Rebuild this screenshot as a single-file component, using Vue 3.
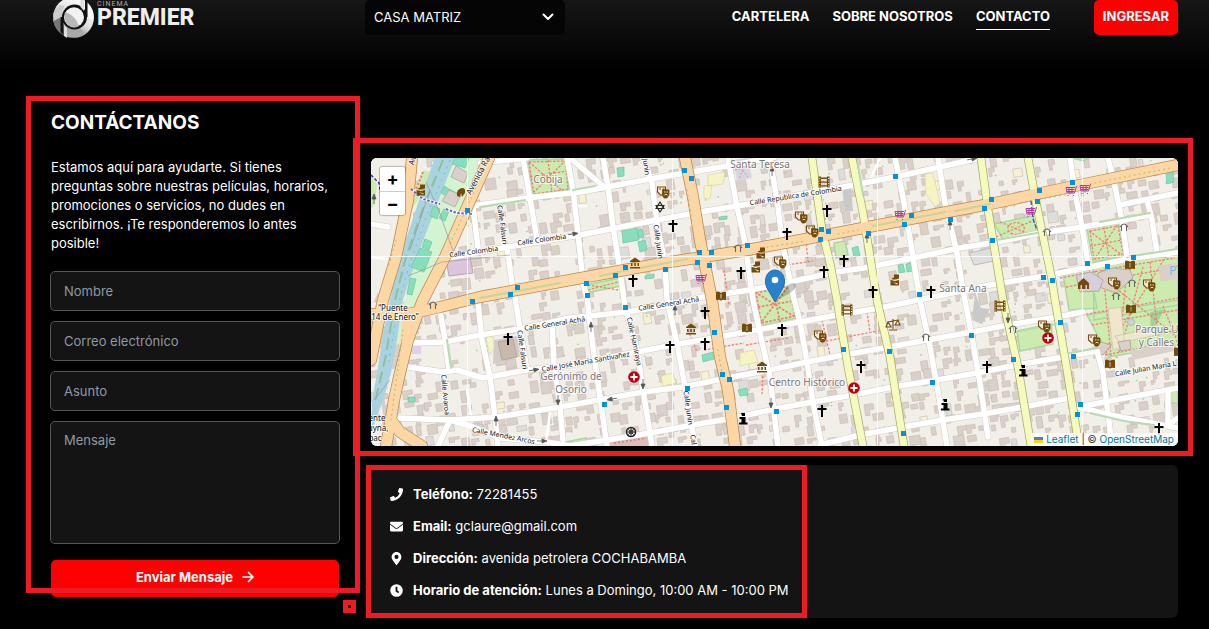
<script setup>
import { ref } from 'vue'

const sede = ref('CASA MATRIZ')
const form = ref({ nombre: '', correo: '', asunto: '', mensaje: '' })

const contacto = [
  { icon: 'phone', label: 'Teléfono:', value: '72281455' },
  { icon: 'mail', label: 'Email:', value: 'gclaure@gmail.com' },
  { icon: 'pin', label: 'Dirección:', value: 'avenida petrolera COCHABAMBA' },
  { icon: 'clock', label: 'Horario de atención:', value: 'Lunes a Domingo, 10:00 AM - 10:00 PM' }
]

const iconPaths = {
  phone: 'M493.400 24.600l-104-24c-11.300-2.600-22.900 3.300-27.500 13.900l-48 112c-4.200 9.800-1.400 21.300 6.900 28l60.600 49.600c-36 76.700-98.900 140.500-177.200 177.200l-49.600-60.600c-6.800-8.300-18.200-11.100-28-6.900l-112 48C3.900 366.500-2 378.100.600 389.400l24 104C27.100 504.200 36.700 512 48 512c256.100 0 464-207.500 464-464 0-11.200-7.700-20.900-18.600-23.400z',
  mail: 'M502 191c4-3 10 0 10 5v204c0 26-22 48-48 48H48c-26 0-48-22-48-48V196c0-5 6-8 10-5 22 17 52 39 154 114 22 15 57 48 92 48 35 0 72-34 92-48 102-75 132-97 154-114zM256 320c23 0 57-29 73-41 133-96 143-104 173-128 6-5 10-12 10-19v-20c0-26-22-48-48-48H48C22 64 0 86 0 112v20c0 7 4 14 10 19 30 24 40 32 173 128 16 12 50 41 73 41z',
  pin: 'M236 502C91 292 64 270 64 192 64 86 150 0 256 0s192 86 192 192c0 78-27 100-172 310-10 13-30 13-40 0zM256 272a80 80 0 1 0 0-160 80 80 0 0 0 0 160z',
  clock: 'M256 8a248 248 0 1 0 0 496 248 248 0 0 0 0-496zm57 350l-88-64c-3-2-5-6-5-10V116c0-7 5-12 12-12h48c7 0 12 5 12 12v138l65 47c5 4 6 12 2 17l-28 39c-4 5-12 6-18 1z'
}

// Small deterministic generator so the building footprints stay stable.
let seed = 41
const rnd = () => {
  seed = (seed * 16807) % 2147483647
  return seed / 2147483647
}
const buildings = []
for (let r = 0; r < 27; r++) {
  for (let c = 0; c < 72; c++) {
    if (rnd() < 0.42) continue
    const x = 366 + c * 11.5 + rnd() * 5
    const y = 156 + r * 11.2 + rnd() * 4
    const w = 4 + rnd() * 7
    const h = 4 + rnd() * 8
    const k = rnd()
    buildings.push({
      d: k < 0.4
        ? `M0 0h${w.toFixed(1)}v${(h / 2).toFixed(1)}h-${(w / 2).toFixed(1)}v${(h / 2).toFixed(1)}h-${(w / 2).toFixed(1)}z`
        : `M0 0h${w.toFixed(1)}v${h.toFixed(1)}h-${w.toFixed(1)}z`,
      t: `translate(${x.toFixed(1)} ${y.toFixed(1)}) rotate(-9)`,
      f: k > 0.96 ? '#dddddf' : k > 0.94 ? '#f6f2cf' : '#d9d0c9'
    })
  }
}

const trees = []
for (let i = 0; i < 170; i++) trees.push([380 + rnd() * 790, 160 + rnd() * 284])

const streets = [
  '480,163 527,158', '472,206 527,198 580,192 650,179 733,165 775,157',
  '447,258 508,247 580,235 657,220 700,212 743,205 843,187 895,177 940,167 980,158',
  '413,343 445,342 480,335 520,329 570,318 627,312 670,305 703,297 750,290 790,282 830,273 870,267 913,258 960,248 997,242 1040,233 1083,227 1123,220 1150,215',
  '408,367 443,372 457,370 483,378 527,370 570,365 637,352 673,345 713,338 757,330 800,322 837,315 880,308 923,299 990,285 1050,275 1090,267 1133,258 1178,252',
  '398,418 450,420 497,417 560,407 643,392 683,387 727,378 770,370 807,362 843,355 890,347 927,340 967,333 1008,325 1057,317 1083,312',
  '450,420 473,427 500,438 547,442 570,446 650,433 693,425 733,418 780,408 813,402 853,395 893,387 937,380 977,373 1017,365 1063,357 1097,351 1103,373 1112,446',
  '820,445 860,435 903,427 943,420 983,414 1023,407 1070,398', '1078,407 1120,399 1178,388', '1078,407 1110,415 1178,428',
  '473,207 478,247', '523,158 530,198 537,240', '507,247 512,283 515,297 520,329 527,370',
  '567,158 573,190 578,233 583,283 587,297 593,347 600,397 607,446', '552,325 554,363 560,407 563,440',
  '603,158 608,187 613,227 620,270 625,307 637,350 643,390 652,446',
  '643,158 652,183 658,230 665,263 667,300 677,343 685,387 692,427 695,446',
  '728,158 737,207 745,243 753,300 760,333 770,377 778,446',
  '770,158 778,207 783,247 793,295 800,322 807,362 813,403 822,446',
  '895,158 903,197 913,257 920,300 930,347 940,403 947,446',
  '938,158 945,203 957,253 963,290 972,337 980,383 988,437',
  '1070,158 1075,193 1082,227 1088,263', '1108,158 1115,187 1122,220 1127,257', '1147,200 1152,220 1157,253', '1120,205 1178,193',
  '440,310 445,340 449,370', '478,303 482,340 490,377 495,417 498,446', '450,420 438,446', '570,158 602,185', '371,224 388,227', '1168,391 1168,425 1178,418'
]
const minor = ['467,390 472,422', '550,412 546,442', '870,180 880,158', '572,206 586,206', '371,257 386,259']
const yellow = [
  '812,158 822,230 830,263 837,300 848,367 863,446', '852,158 863,213 877,300 890,357 904,446',
  '981,158 988,210 993,240 1003,300 1018,367 1031,446', '1028,158 1037,207 1052,280 1055,300 1067,370 1079,446'
]
const orange = [
  '412,158 408,200 396,257 383,300 371,360', '489,158 465,212 445,257 422,302 408,340 400,373 394,400 390,425 386,446', '391,420 400,432 422,446',
  '371,314 408,314 440,307 480,297 570,280 663,263 703,257 747,250 790,242 863,228 947,212 990,204 1070,187 1178,165',
  '685,158 693,197 700,240 712,300 720,357 728,390 735,446'
]

const stops = [
  [467,210],[517,287],[510,294],[472,301],[684,170],[691,178],[586,283],[615,275],[625,267],[699,252],[711,252],[697,262],[709,265],[665,269],[747,245],
  [587,295],[625,307],[714,332],[722,374],[729,379],[687,388],[604,404],[726,407],[776,411],[821,229],[828,231],[820,239],[868,233],[904,224],[911,215],[895,176],[950,219],
  [919,294],[843,349],[889,351],[932,382],[971,335],[903,433],[991,199],[984,208],[992,240],[1039,190],[1037,201],[1072,182],[1087,263],[1107,266],[1133,257],[1043,277],[1052,280],
  [1060,322],[1013,359],[1073,356],[1080,404],[1077,414]
]
const crosses = [[673,226],[787,234],[633,281],[741,273],[827,211],[844,261],[824,272],[873,292],[931,292],[508,339],[705,313],[670,347],[705,344],[782,330],[861,367],[822,411],[987,367],[1159,429]]
const theatres = [[663,192],[780,262],[801,217],[812,231],[820,336],[1044,326],[1094,340],[1114,283],[1149,285]]
const museums = [[635,263],[691,329],[762,367]]
const books = [[721,296],[747,328],[1130,265],[1131,309],[1110,364],[1179,352]]
const films = [[824,182],[847,310],[1000,306]]
const carts = [[701,279],[900,215],[1071,191],[1085,189],[1031,212]]
const gates = [[738,248],[1047,232],[1124,227],[926,337],[1013,329],[1132,283],[1116,296],[433,305]]
const infos = [[743,419],[945,405],[1023,371]]
const monuments = [[421,190],[761,253],[756,267],[895,280]]
const hospitals = [[634,377],[854,388],[1048,338]]
const arrows = [[573,234,82],[591,327,0],[675,310,0],[867,238,0],[950,225,0],[772,171,0],[643,384,180],[771,403,180],[558,400,180],[496,421,0],[1008,318,180],[374,199,0],[534,370,82],[542,441,90],[612,399,-100],[972,159,80]]

const labels = [
  ['Avenida Ra.', 481, 176, -62, 8], ['Av', 415, 161, -75, 8],
  ['Calle Colombia', 474, 254, -8, 7], ['Calle Colombia', 542, 242, -8, 7], ['Calle Falsuri', 500, 225, 82, 7], ['Calle Falsuri', 520, 350, 82, 7],
  ['Junín', 644, 167, 82, 7], ['Calle Junín', 656, 242, 82, 7], ['Calle Junín', 686, 408, 82, 7], ['Cal', 691, 440, 82, 7],
  ['Calle Republica de Colombia', 796, 198, -9, 7], ['“Puente', 393, 311, 0, 8], ['14 de Enero”', 395, 320, 0, 8],
  ['Calle General Achá', 555, 326, -9, 7], ['Calle General Achá', 669, 306, -9, 7], ['Calle José María Santivañez', 586, 364, -10, 7],
  ['Calle Hamiraya', 632, 342, 78, 7], ['Calle Avaroa', 443, 395, 85, 7], ['Calle Mendez Arcos', 503, 438, 11, 7],
  ['ente', 377, 421, 0, 8], ['uyna,', 378, 431, 0, 8], ['pac', 375, 441, 0, 8], ['Calle Julian Maria L', 1146, 371, -10, 7]
]
const places = [['Cobija', 548, 183], ['Santa Teresa', 760, 168], ['Santa Ana', 963, 292], ['Gerónimo de', 571, 380], ['Osorio', 571, 393], ['Centro Histórico', 807, 386], ['Parque Un', 1160, 333], ['y Calles Ar', 1163, 346]]
</script>

<template>
  <div class="page">
    <header class="top">
      <a class="logo" href="#" aria-label="Cinema Premier">
        <svg class="mark" viewBox="52 0 43 39" aria-hidden="true">
          <defs>
            <linearGradient id="ring" x1="0.8" y1="0" x2="0.2" y2="1"><stop offset="0" stop-color="#fff" /><stop offset="0.5" stop-color="#e2e2e2" /><stop offset="1" stop-color="#626262" /></linearGradient>
          </defs>
          <circle cx="73.500" cy="17.500" r="20.500" fill="url(#ring)" />
          <path d="M53 17a20.500 20.500 0 0 0 8 16V20l-2-3z" fill="#777" />
          <path d="M53.500 13l6-8 5 1-5 12-6 3z" fill="#ccc" />
          <path d="M66 29q8 3 14-1l5 6-6 3-12 0z" fill="#a9a9a9" />
          <path d="M86 7l7 4v9l-4-2z" fill="#f8f8f8" />
          <circle cx="74.500" cy="17" r="12.500" fill="#111" />
          <path d="M60.500 17h3v18l-3-3zM85 0h2.500v17H85z" fill="#111" />
          <circle cx="74" cy="17.300" r="10" fill="#f2f2f2" />
          <path d="M65 12q10 3 14 14-5 3-10 0-6-5-4-14z" fill="#b8b8b8" />
          <path d="M80.500 0h3.500v11l-3.500-4zM64 25l3 3v10l-3-2z" fill="#ddd" />
        </svg>
        <span class="brand"><small>CINEMA</small><b>PREMIER</b></span>
      </a>
      <div class="sede">
        <select v-model="sede" aria-label="Sede"><option>CASA MATRIZ</option></select>
        <svg viewBox="0 0 12 8" aria-hidden="true"><path d="M1.500 1.500L6 6l4.500-4.500" fill="none" stroke="#fff" stroke-width="2" stroke-linecap="round" stroke-linejoin="round" /></svg>
      </div>
      <nav>
        <a href="#">CARTELERA</a>
        <a href="#">SOBRE NOSOTROS</a>
        <a href="#" class="active">CONTACTO</a>
      </nav>
      <button class="login" type="button">INGRESAR</button>
    </header>

    <main>
      <section class="left">
        <h1>CONTÁCTANOS</h1>
        <p>Estamos aquí para ayudarte. Si tienes preguntas sobre nuestras películas, horarios, promociones o servicios, no dudes en escribirnos. ¡Te responderemos lo antes posible!</p>
        <form @submit.prevent>
          <input v-model="form.nombre" type="text" placeholder="Nombre" aria-label="Nombre" />
          <input v-model="form.correo" type="email" placeholder="Correo electrónico" aria-label="Correo electrónico" />
          <input v-model="form.asunto" type="text" placeholder="Asunto" aria-label="Asunto" />
          <textarea v-model="form.mensaje" placeholder="Mensaje" aria-label="Mensaje"></textarea>
          <button class="send" type="submit">Enviar Mensaje
            <svg viewBox="0 0 12 12" aria-hidden="true"><path d="M1 6h10M6.500 1.500L11 6l-4.500 4.500" fill="none" stroke="#fff" stroke-width="1.700" stroke-linecap="round" stroke-linejoin="round" /></svg>
          </button>
        </form>
        <div class="frame frame-form" aria-hidden="true"></div>
        <div class="frame frame-dot" aria-hidden="true"></div>
      </section>

      <section class="right">
        <div class="map-wrap">
          <div class="map">
            <svg class="tiles" viewBox="371 158 807 288" preserveAspectRatio="xMidYMid slice" role="img" aria-label="Mapa">
              <rect x="300" y="100" width="1000" height="420" fill="#f2efe9" />
              <g stroke="#c9bcb2" stroke-width="0.600">
                <path v-for="(b, i) in buildings" :key="i" :d="b.d" :transform="b.t" :fill="b.f" />
              </g>
              <circle v-for="(t, i) in trees" :key="'t' + i" :cx="t[0]" :cy="t[1]" r="0.900" fill="#a9d3a0" />

              <path d="M371 158h40l-4 50-14 50-22 50z" fill="#f2efe9" />
              <path d="M371 176l6 8-2 20-4 5zM424 170l6 2-12 28-13 20-3-4 12-28z" fill="#cdebb0" />
              <path d="M423 172l-9 22-8 20-2 20" fill="none" stroke="#e77" stroke-width="2" stroke-dasharray="2 2" />
              <path d="M371 175l8 8 3 18" fill="none" stroke="#33a" stroke-width="1.500" stroke-dasharray="3 2" />
              <path d="M454 158h31l-22 50-24 50-21 44-15 40-9 4 22-94z" fill="#d4f3d0" />
              <path d="M435 158h20l-14 36-24 63-14 43-6 40-6 33-8 27-11 30v-30l5-27 5-33 8-40 10-43 19-57z" fill="#aad3df" />
              <path d="M443 160l-18 43-19 54-11 43-9 55-11 47" fill="none" stroke="#8fbf9f" stroke-width="2" stroke-dasharray="12 5" />
              <path d="M450 160l-24 58-17 48-11 40-10 60" fill="none" stroke="#7ba9c4" stroke-width="0.800" stroke-dasharray="2 5" />
              <g fill="#88dfbe" stroke="#6fc6a2" stroke-width="0.700">
                <path d="M455 158h14l-4 10-13-4zM444 186l14 8-3 7-14-8zM420 248l12 4-8 20-13-5zM433 206l7 3-3 10-7-3zM444 209l5 2-4 10-6-3zM410 278l6 1-4 16-5-1zM425 239l7 3-3 8-7-3zM443 262l3 1-2 11-3-1z" />
                <path d="M622 231l15-3 2 12-16 3zM637 231l5-2 2 8-5 1zM638 242l7-2 2 10-7 2zM617 168l7-1v9l-6 1zM702 355l11-3 1 7-11 3zM738 390l9-2 1 7-8 1zM852 248l6-2 2 10-6 1zM898 265l5-1 2 8-6 1zM906 264l5-1 2 8-6 1zM1166 174l7-2 1 10-7 2zM1030 335l5-1 1 9-6 1zM408 397h7v5h-7zM645 276l9-2v4l-9 1zM719 217l8-1v3l-8 1zM407 158h8v6h-8z" />
              </g>
              <path d="M456 166l12 7-4 10-13-6zM449 190l12 5-6 12-13-6z" fill="#d9d0c9" stroke="#b5a79c" stroke-width="0.800" />
              <path d="M446 260l24-4 3 17-24 3z" fill="#dcc5dc" stroke="#b9a3b9" />
              <path d="M411 343h10v11h-11z" fill="#e2d2e6" />
              <path d="M708 175l17-3-2 12-15 2zM704 186l8-1-2 14-6-1zM925 174l8-1 7 30-5 4-9-13zM661 376l12-3 3 10-13 3zM740 353l14-3 4 12-18 4zM486 337l7-1 2 13-5 5-3-10z" fill="#f7f4c4" stroke="#ddd5a5" stroke-width="0.700" />
              <path d="M494 340l23-4 5 20-29 8z" fill="#d2ccc8" />
              <path d="M498 342l15-3 4 18-15 3z" fill="#c9b8ac" stroke="#b5a79c" />
              <path d="M842 188l9-1 2 24-8 1zM975 293l6 15 9 1-8 15-10-4z" fill="#c9c9ca" />
              <path d="M969 253l22-5 3 13-20 4z" fill="#dedee0" stroke="#bbb" />

              <g fill="#cdebb0" stroke="#a9d8a2" stroke-width="1.500">
                <path d="M528 160l38-1 3 31-36 6zM754 291l37-8 6 35-37 8zM1087 229l32-6 6 33-32 6zM994 224l39-8 4 16-34 7zM586 285l34-7 1 8-35 7zM834 243l11-2 3 14-12 3z" />
                <path d="M1063 273l26-5 8 40-28 2zM1072 158h17l-5 3zM1093 266l85-14v53l-84 15zM1087 315l91-15v45l-69 12zM1017 331l34-7 2 20-33 7zM566 442l20-4 2 8h-22zM1170 391h8v13l-9-2z" />
              </g>
              <path d="M1150 312l15-3-14 24z" fill="#a3d49a" />
              <g fill="none" stroke="#f17f78" stroke-width="1.300" stroke-dasharray="2.500 1.500">
                <path d="M529 162l35 30M566 160l-32 32M530 177l37-6M548 160l4 33M529 162l36-1 3 28-34 5z" />
                <path d="M755 292l40 25M790 284l-30 40M758 307l35-6M773 288l7 34M756 293l33-7 6 30-34 7z" stroke-width="1.800" />
                <path d="M1089 231l33 24M1117 225l-23 35M1090 246l32-6M1104 227l5 32M1090 231l28-5 5 28-29 5zM996 237l36-16M1000 222l34 14M1008 230a7 5 0 1 0 16-3 7 5 0 1 0-16 3M588 290l30-8M588 285l30 5" />
                <path d="M1060 278l60-11 55-9M1066 287l90-16 22-5M1094 271l82 65M1166 256l-60 97M1082 315l96-17M1092 325l86-15M1105 355l73-14M1127 270l-8 82M1143 267l-23 85M1103 270l8 86M1150 262l9 83M1108 344l70-14M1163 306l13 32M704 350l40-7M780 266l33-5M806 240l2 22M822 342l60-12M867 312l3 20M822 320l8 35M724 270l5 35M746 345l42-7M763 372l-1 22M688 330l9 22" />
              </g>
              <path d="M1098 273l15-5 17 2 3 8-17 15-17-6z" fill="#d9d0c9" stroke="#b9aaa0" />
              <path d="M1076 275l15-3 12 8-4 11-19 1z" fill="#d6cedb" stroke="#b9aaa0" />
              <path d="M1108 309l13-2 4 40-12 3zM1115 336l30-6 17 4-42 9z" fill="#eee6cd" stroke="#c9bfa8" stroke-width="0.700" />
              <path d="M1118 342l12-2 1 9-10 2zM1098 341l13 4-8 10-8-3z" fill="#d9d0c9" stroke="#b9aaa0" />
              <path d="M1130 350l42-8 2 9-41 9zM1158 266l18-3 1 16-16 3z" fill="#d9d0c9" />
              <path d="M733 160l15-2 4 20-15 3z" fill="#d5d7e5" /><path d="M736 162l12 15M747 160l-8 19M735 170l15-3" stroke="#e88" stroke-dasharray="2 1.500" />
              <path d="M610 442l38-6 2 10h-40z" fill="#e2bdb5" /><path d="M614 443l32-5" stroke="#c88" stroke-width="2" stroke-dasharray="2 2" />

              <g fill="none" stroke-linejoin="round" stroke-linecap="round">
                <polyline v-for="(s, i) in minor" :key="'mi' + i" :points="s" stroke="#fff" stroke-width="2.500" />
                <polyline v-for="(s, i) in streets" :key="'sc' + i" :points="s" stroke="#d3ccc6" stroke-width="6.500" />
                <polyline v-for="(s, i) in streets" :key="'s' + i" :points="s" stroke="#fff" stroke-width="5.500" />
                <polyline v-for="(s, i) in yellow" :key="'yc' + i" :points="s" stroke="#a8ad68" stroke-width="8.500" />
                <polyline v-for="(s, i) in orange" :key="'oc' + i" :points="s" stroke="#b98a4c" stroke-width="12" />
                <polyline v-for="(s, i) in yellow" :key="'y' + i" :points="s" stroke="#f7fabf" stroke-width="7" />
                <polyline v-for="(s, i) in orange" :key="'o' + i" :points="s" stroke="#fcd6a4" stroke-width="10.500" />
                <path d="M402 320h12l-6 20-8 3z" fill="#fcd6a4" stroke="none" />
                <path d="M480 298l80-15M600 276l28-6M640 268l48-9M873 226l72-14M955 211l35-7" stroke="#c9d39a" stroke-width="2" />
                <path d="M396 240l-8 28M484 170l-34 74M403 330l-12 90M687 190l5 32M718 350l4 24M1020 203l50-9M1090 184l80-16M762 248l44-7M838 234l20-4" stroke="#a5b883" stroke-width="1" stroke-dasharray="1 4" />
                <path d="M447 340l4 28M480 207l45-7M573 190l22-4M1020 331l36-7M1090 413l34 8 30 4M1070 353l28-5M1127 257l50-8M1100 222l50-9M858 165l5 30M997 240l40-7" stroke="#b5dbae" stroke-width="2" />
              </g>
              <g fill="none" stroke="#999" stroke-width="0.700">
                <path d="M426 182l13 29 14 40M408 276l34-14 68-7M374 400l16-20M430 190l-20 60" />
              </g>
              <path d="M413 190l10 9 17 5M446 209l11 4 16 1" fill="none" stroke="#fff" stroke-width="3" />
              <path d="M411 189l12 10 17 5M446 209l11 4 16 1" fill="none" stroke="#6262c8" stroke-width="2" stroke-dasharray="2.500 1.500" />
              <path d="M1031 201l2 18 4 11" fill="none" stroke="#44d" stroke-width="1.300" stroke-dasharray="4 2" />
              <circle cx="1131" cy="322" r="3.500" fill="#d0d0dc" stroke="#aaa" stroke-width="0.700" />

              <g stroke="#fff" stroke-width="0.900" opacity="0.850"><path d="M467.500 158v288M672.500 158v288M877.500 158v288M1082.500 158v288M371 256.500h807" /></g>

              <path v-for="(a, i) in arrows" :key="'a' + i" :transform="`translate(${a[0]} ${a[1]}) rotate(${a[2]})`" d="M0 5V-1M-2 0L0-5 2 0z" fill="#555" stroke="#555" stroke-width="0.800" />

              <g class="halo place"><text v-for="(p, i) in places" :key="'p' + i" :x="p[1]" :y="p[2]">{{ p[0] }}</text></g>
              <g class="halo street"><text v-for="(l, i) in labels" :key="'l' + i" :transform="`translate(${l[1]} ${l[2]}) rotate(${l[3]})`" :font-size="l[4]">{{ l[0] }}</text></g>
              <text x="1169" y="275" class="parking">P</text>

              <rect v-for="(s, i) in stops" :key="'b' + i" :x="s[0] - 2" :y="s[1] - 2" width="5" height="5" fill="#0092da" />
              <path v-for="(g, i) in gates" :key="'g' + i" :transform="`translate(${g[0]} ${g[1]})`" d="M-4 0Q0-6 4 0M-2.500-1V4M2.500-1V4" fill="none" stroke="#666" stroke-width="1.100" />
              <path v-for="(c, i) in crosses" :key="'c' + i" :transform="`translate(${c[0]} ${c[1]})`" d="M-1-6h2v3h3.500v2H1v7h-2v-7h-3.500v-2H-1z" fill="#000" />
              <g fill="#734a08">
                <path v-for="(m, i) in museums" :key="'m' + i" :transform="`translate(${m[0]} ${m[1]})`" d="M-5-2L0-5.500 5-2v1H-5zM-4 0h1.500v3H-4zM-0.800 0h1.600v3h-1.600zM2.500 0H4v3H2.500zM-5 4H5v1.500H-5z" />
                <path v-for="(m, i) in books" :key="'k' + i" :transform="`translate(${m[0]} ${m[1]})`" d="M-5-3.500l1-1Q-1-4.500 0-3 1-4.500 4-4.500l1 1V4Q1 3 0 4.800-1 3-5 4zM-.4-2v4.500h.8V-2z" />
                <path v-for="(m, i) in monuments" :key="'n' + i" :transform="`translate(${m[0]} ${m[1]})`" d="M-1-5.500h5v4L1-.5h-3l-1.500-1 2.500-1zM-4.500 0L0 1l4-1v5.500h-8.500zM-2 2l4 2.500 1-1z" />
                <path v-for="(m, i) in films" :key="'f' + i" fill-rule="evenodd" :transform="`translate(${m[0]} ${m[1]})`" d="M-5.500-5.500H-3v1h6v-1h2.500v11H3v-1h-6v1h-2.500zM-3-3v2.500h6V-3zM-3 .8v2.500h6V.8zM-4.800-4v1h1v-1zM-4.800-1.500v1h1v-1zM-4.800 1v1h1V1zM-4.800 3.500v1h1v-1zM4-4v1h1v-1zM4-1.500v1h1v-1zM4 1v1h1V1zM4 3.500v1h1v-1z" />
                <path d="M1078 289v-6l5.500-5 5.500 5v6h-2v-4h-1.500v4h-3.500v-4h-1.500v4z" /><path d="M457 196q-1-7 5-8 4 0 3 5l-3 4-1-4-1 4z" />
              </g>
              <g v-for="(m, i) in theatres" :key="'th' + i" :transform="`translate(${m[0]} ${m[1]})`" stroke="#734a08">
                <path d="M-5.500-5h8v5l-3 3h-2l-3-3z" fill="#f4eadb" stroke-width="1.100" /><path d="M-4-3h2M0-3h1.500" stroke-width="1" />
                <path d="M-.5-2.500l6.500.5v5L4 6H1L-.5 3z" fill="#734a08" stroke-width="0.800" /><path d="M1 0h1.500M3.500 0H5M1.500 3q1.500-1.500 3 0" stroke="#f4eadb" stroke-width="0.900" fill="none" />
              </g>
              <path v-for="(m, i) in carts" :key="'ca' + i" :transform="`translate(${m[0]} ${m[1]})`" d="M5.500-5L3.500 2h-7M-5-3.500H4M-4.500-1.500h8M-4 0.500h7M-5-3.500L-4 2M-2-3.500v5.500M1-3.500v5.500M-3.500 4.500h1M2 4.500h1" fill="none" stroke="#ac39ac" stroke-width="1" />
              <g fill="none" stroke="#734a08" stroke-width="1.100"><path d="M893 319v10M889 330h8M888 322l10-2M886 327l2-5 3 5zM895 325l3-5 2 5z" /></g>
              <path v-for="(m, i) in infos" :key="'i' + i" :transform="`translate(${m[0]} ${m[1]})`" d="M-2-6h4v3h-3zM-3.500-2H2.500V3.500H4.500V5.500H-4V3.500H-1.500V0h-2z" fill="#000" />
              <g v-for="(m, i) in hospitals" :key="'h' + i" :transform="`translate(${m[0]} ${m[1]})`"><circle r="5.800" fill="#c0000c" /><path d="M-.9-3.500h1.800v2.600h2.600v1.800H.9v2.600H-.9V.9h-2.600V-.9h2.600z" fill="#fff" /></g>
              <g fill="none" stroke="#222"><path d="M660 202l4 6.500h-8zM660 212l-4-6.500h8z" stroke-width="1.100" /><circle cx="631" cy="432" r="4.500" stroke-width="1.500" /><circle cx="631" cy="432" r="2" /><path d="M631 427v10M626 432h10M627.500 428.500l7 7M634.500 428.500l-7 7" stroke-width="0.700" /></g>

              <path d="M776 301l12-16q7-4 8 0 0 4-6 8z" fill="#000" opacity="0.220" />
              <path d="M775 302l-8-14c-4-8 0-18 8-18s12 10 8 18z" fill="#2a81cb" stroke="#236fae" stroke-width="1" /><circle cx="775" cy="280" r="3.300" fill="#fff" />
            </svg>
            <div class="zoom"><button type="button" aria-label="Acercar">+</button><button type="button" aria-label="Alejar">−</button></div>
            <div class="credit"><svg viewBox="0 0 12 8" aria-hidden="true"><path d="M0 0h12v4H0z" fill="#4c7be1" /><path d="M0 4h12v4H0z" fill="#ffd500" /></svg><a href="#">Leaflet</a> | © <a href="#">OpenStreetMap</a></div>
          </div>
          <div class="frame frame-map" aria-hidden="true"></div>
        </div>

        <div class="info">
          <ul>
            <li v-for="c in contacto" :key="c.icon">
              <svg viewBox="0 0 512 512" aria-hidden="true"><path :d="iconPaths[c.icon]" fill="#fff" fill-rule="evenodd" /></svg>
              <span><b>{{ c.label }}</b> {{ c.value }}</span>
            </li>
            <li class="frame frame-info" aria-hidden="true"></li>
          </ul>
        </div>
      </section>
    </main>
  </div>
</template>

<style>
html, body { background: #000; }
body { margin: 0; }
</style>

<style scoped>
* { box-sizing: border-box; }
.page { font-family: Inter, "Liberation Sans", sans-serif; font-size: 13px; color: #fff; background: #000; min-height: 100vh; overflow: hidden; }
a { color: inherit; text-decoration: none; }
button, input, textarea, select { font-family: inherit; font-size: 13px; }
.top { height: 70px; padding: 0 31px 0 52px; display: flex; align-items: flex-start; background: linear-gradient(#161616, #000); }
.logo { display: flex; width: 313px; flex: none; }
.mark { width: 43px; height: 39px; }
.brand { display: flex; flex-direction: column; padding: 1px 0 0 2px; font-family: Roboto, sans-serif; color: #eee; }
.brand small { font-size: 7px; line-height: 7px; letter-spacing: 1px; color: #aaa; }
.brand b { font-size: 23px; line-height: 20px; font-weight: 800; }
.sede { position: relative; width: 200px; flex: none; }
.sede select { width: 100%; height: 35px; padding: 0 9px 2px; border: 0; border-radius: 5px; background: #050505; color: #fff; appearance: none; }
.sede svg { position: absolute; right: 11px; top: 13px; width: 12px; height: 8px; pointer-events: none; }
nav { margin-left: auto; display: flex; gap: 23px; font-weight: 700; }
nav a { height: 30px; line-height: 33px; white-space: nowrap; }
nav .active { border-bottom: 1px solid #fff; }
.login { margin-left: 44px; width: 84px; height: 35px; padding: 0 0 3px; border: 0; border-radius: 5px; background: #f00; color: #fff; font-weight: 700; }
main { display: grid; grid-template-columns: 290px minmax(0, 1fr); gap: 31px; padding: 41px 31px 11px 50px; align-items: start; }
.left { position: relative; }
h1 { margin: 0 1px; font-size: 19px; line-height: 24px; font-weight: 700; }
p { margin: 23px 1px 18px; line-height: 19px; }
form { display: flex; flex-direction: column; gap: 10px; }
input, textarea { width: 100%; height: 40px; padding: 0 13px; border: 1px solid #555; border-radius: 5px; background: #141414; color: #fff; outline: 0; }
textarea { height: 123px; padding: 10px 13px; resize: none; display: block; }
::placeholder { color: #9199a3; opacity: 1; }
.send { margin: 6px 1px 0; height: 37px; padding: 0 0 3px; border: 0; border-radius: 5px; background: #f00; color: #fff; font-weight: 700; display: flex; align-items: center; justify-content: center; gap: 9px; }
.send svg { width: 12px; height: 12px; }
.right { padding-top: 47px; }
.map-wrap { position: relative; }
.map { position: relative; height: 288px; border-radius: 6px; overflow: hidden; background: #f2efe9; }
.tiles { display: block; width: 100%; height: 100%; font-family: "Noto Sans", sans-serif; }
.halo text { text-anchor: middle; paint-order: stroke; stroke: #fff; stroke-width: 2px; stroke-opacity: .75; stroke-linejoin: round; }
.street { fill: #111; }
.place { fill: #777; font-size: 10px; }
.parking { fill: #7cbbe0; font-size: 13px; }
.zoom { position: absolute; left: 9px; top: 9px; width: 25px; border-radius: 3px; overflow: hidden; box-shadow: 0 0 1px 1px rgba(0, 0, 0, .25); }
.zoom button { display: block; width: 25px; height: 24px; padding: 0; border: 0; background: #fff; color: #000; font-size: 18px; line-height: 24px; font-weight: 700; }
.zoom button + button { border-top: 1px solid #ccc; }
.credit { position: absolute; right: 0; bottom: 0; padding: 0 4px 0 3px; font-size: 10px; line-height: 13px; color: #333; background: rgba(255, 255, 255, .8); white-space: nowrap; }
.credit a { color: #0078a8; }
.credit svg { width: 9px; height: 6px; margin-right: 3px; }
.info { margin-top: 19px; border-radius: 6px; background: #141414; }
ul { position: relative; width: fit-content; margin: 0; padding: 13px 18px 12px 19px; list-style: none; }
li:not(.frame) { height: 32px; display: flex; align-items: center; gap: 10px; }
li svg { width: 13px; height: 13px; flex: none; }
.frame { position: absolute; border: 5px solid #ed1c24; pointer-events: none; }
.frame-form { inset: -15px -20px 4px -24px; }
.frame-dot { left: 293px; bottom: -16px; width: 13px; height: 13px; }
.frame-map { inset: -20px -15px -10px -18px; }
.frame-info { inset: 0 0 0 -5px; }
</style>
